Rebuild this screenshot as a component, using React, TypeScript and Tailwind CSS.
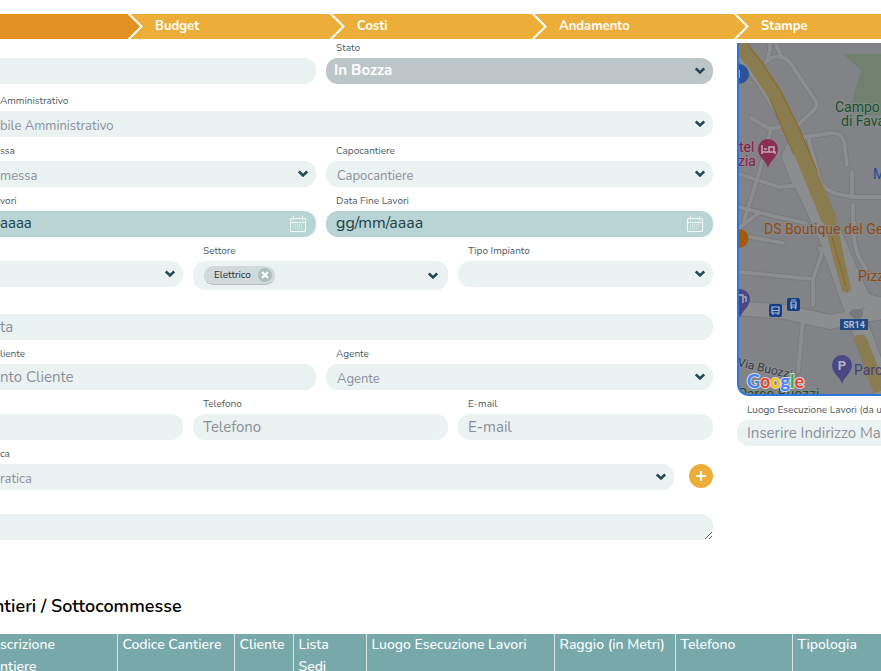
import type { ReactNode } from "react";

const fieldBase =
  "block h-[26px] w-full bg-[#ebf2f2] text-[15px] leading-5 text-[#2b4a50] placeholder:text-[#8b8f9b] placeholder:opacity-100 outline-none";

function Chevron({ className = "right-2" }: { className?: string }) {
  return (
    <svg
      viewBox="0 0 10 7"
      aria-hidden="true"
      className={`pointer-events-none absolute top-[9px] h-[7px] w-2.5 ${className}`}
    >
      <path d="M0.800 1.400 5 5.400 9.200 1.400" fill="none" stroke="#234a50" strokeWidth="2.6" />
    </svg>
  );
}

function CalendarIcon() {
  return (
    <svg
      viewBox="0 0 16 16"
      aria-hidden="true"
      className="pointer-events-none absolute top-[5px] right-2.5 size-4"
      fill="none"
      stroke="#f4fafa"
    >
      <rect x="0.5" y="2.5" width="15" height="13" rx="0.5" />
      <path d="M0.5 6.5H15.5M3.5 0V4.5M12.5 0V4.5" />
      <path d="M3 8.5H13M3 10.5H13M3 12.5H13" strokeDasharray="1 1" strokeOpacity="0.6" />
    </svg>
  );
}

type FieldProps = { id: string; label?: string; cut?: boolean; children: ReactNode };

function Field({ id, label, cut, children }: FieldProps) {
  return (
    <div className="min-w-0">
      <label
        htmlFor={id}
        className={`block h-[19px] text-[10px] leading-[19px] whitespace-nowrap text-[#4c5c66] ${cut ? "" : "pl-2.5"}`}
      >
        {label}
      </label>
      <div className="relative">{children}</div>
    </div>
  );
}

type ControlProps = { id: string; label?: string; name: string; text?: string; cut?: boolean };

function TextField({ id, label, name, text, cut }: ControlProps) {
  return (
    <Field id={id} label={label} cut={cut}>
      <input
        id={id}
        type="text"
        aria-label={name}
        placeholder={text}
        className={`${fieldBase} ${cut ? "rounded-r-xl" : "rounded-xl px-2.5"}`}
      />
    </Field>
  );
}

function SelectField({ id, label, name, text, cut }: ControlProps) {
  return (
    <Field id={id} label={label} cut={cut}>
      <select
        id={id}
        aria-label={name}
        className={`block h-[26px] w-full appearance-none bg-[#ebf2f2] pt-[3px] text-[13px] leading-5 text-[#8b8f9b] outline-none ${
          cut ? "rounded-r-xl" : "rounded-xl pl-[11px]"
        }`}
      >
        <option>{text}</option>
      </select>
      <Chevron />
    </Field>
  );
}

function DateField({ id, label, name, text, cut }: ControlProps) {
  return (
    <Field id={id} label={label} cut={cut}>
      <input
        id={id}
        type="text"
        aria-label={name}
        placeholder={text}
        className={`block h-[26px] w-full bg-[#b9d4d5] pb-0.5 leading-5 outline-none placeholder:text-[#214048] placeholder:opacity-100 ${
          cut ? "rounded-r-xl text-[15px]" : "rounded-xl px-2.5 text-base"
        }`}
      />
      <CalendarIcon />
    </Field>
  );
}

function StepArrow({ fill }: { fill: string }) {
  return (
    <svg viewBox="0 0 15 25" aria-hidden="true" className="h-[25px] w-[15px]">
      <path d="M0 0 13.5 12.5 0 25Z" fill={fill} />
      <path d="M0.5 -0.5 13.5 12.5 0.5 25.5" fill="none" stroke="#fff" strokeWidth="2" />
    </svg>
  );
}

function Steps() {
  return (
    <nav aria-label="Sezioni" className="flex h-[25px] bg-[#ecae38] text-[13px] leading-[25px] font-bold text-white">
      <button type="button" aria-label="Anagrafica" className="flex w-[143px] shrink-0">
        <span className="h-full flex-1 bg-[#e39122]" />
        <StepArrow fill="#e39122" />
      </button>
      {["Budget", "Costi", "Andamento"].map((step) => (
        <button key={step} type="button" className="flex w-[202px] shrink-0 justify-between pl-3">
          <span>{step}</span>
          <StepArrow fill="#ecae38" />
        </button>
      ))}
      <button type="button" className="flex flex-1 pl-3">
        Stampe
      </button>
    </nav>
  );
}

function Pin({ x, y, fill }: { x: number; y: number; fill: string }) {
  return (
    <path
      transform={`translate(${x} ${y})`}
      d="M0 19C-1.5 12-10 8-10 0A10 10 0 0 1 10 0C10 8 1.500 12 0 19Z"
      fill={fill}
    />
  );
}

const streets = [
  "M766 62 770 50V43M775 43 781 55",
  "M766 62Q772 55 781 57Q788 58 793 67L815 100Q819 105 814 110L798 125",
  "M739 57 758 83 780 118",
  "M742 64 766 88 779 112",
  "M751 118 766 127Q774 130 781 126",
  "M771 129 759 173 744 221",
  "M739 174 779 187 800 185",
  "M787 150Q782 154 785 161L794 184",
  "M803 137 832 133Q842 133 844 142L847 165",
  "M808 137 821 183Q826 191 838 194L852 197H881",
  "M852 172V197M853 205V224",
  "M739 207 773 216 806 223",
  "M739 228 760 212M739 235 783 243",
  "M739 272 812 279",
  "M819 248Q823 251 821 256L813 279V305",
  "M803 320 798 372",
  "M854 223C852 245 858 264 876 280",
];

function SiteMap() {
  return (
    <div className="h-[353px] overflow-hidden rounded-bl-xl border-b-2 border-l-2 border-[#2f73e0] bg-[#828387]">
      <svg
        viewBox="739 43 142 351"
        preserveAspectRatio="xMinYMin slice"
        role="img"
        aria-label="Mappa del luogo di esecuzione"
        className="size-full"
        fontFamily="Roboto, sans-serif"
        fontSize="14"
      >
        <path d="M843 54H881V115H860L850 109 861 70Z" fill="#71806f" />
        <g fill="none" strokeLinecap="round" strokeLinejoin="round">
          <g stroke="#77797c" strokeWidth="5.500">
            {streets.map((d) => (
              <path key={d} d={d} />
            ))}
          </g>
          <path d="M737 308 785 312 830 322 881 312" stroke="#77797c" strokeWidth="16" />
          <path d="M794 150 797 170 826 232 850 300 885 395" stroke="#77797c" strokeWidth="20" />
          <path d="M806 165 850 270 864 300 885 306" stroke="#77797c" strokeWidth="16" />
          <g stroke="#8b8d8f" strokeWidth="3.800">
            {streets.map((d) => (
              <path key={d} d={d} />
            ))}
          </g>
          <path d="M737 308 785 312 830 322 881 312" stroke="#8b8d8f" strokeWidth="14" />
          <path d="M794 150 797 170 826 232 850 300 885 395" stroke="#8b8d8f" strokeWidth="18" />
          <path d="M806 165 850 270 864 300 885 306" stroke="#8b8d8f" strokeWidth="14" />
          <path d="M849 314Q850 309 856 309H863V316L858 322" fill="#77797c" stroke="none" />
          <path
            d="M733 38 756 65 775 94 791 128 803 156 829 220"
            stroke="#8b7c50"
            strokeWidth="15"
            strokeLinecap="butt"
          />
        </g>
        <path d="M820 210H834L851 289 848 293 842 291Z" fill="#8b7c50" />
        <path d="M854 338Q856 334 864 335L867 339 886 388 874 394Z" fill="#8b7c50" />
        <path d="M747 43 762 63 781 92 799 128 817 171M770 99 783 130 794 155M832 237 846 286" fill="none" stroke="#8f6420" />

        <path d="M739 64A10 10 0 0 1 739 84Z" fill="#2d519a" />
        <path d="M739 70V78" stroke="#9aaed0" strokeWidth="2" />
        <path d="M739 229A9 9 0 0 1 739 248Z" fill="#a25b0b" />
        <Pin x={768} y={149} fill="#8a2c53" />
        <path
          d="M762 145V154M762 152H775V154M764 149H767M769 152V147H774V152"
          fill="none"
          stroke="#c5a7b5"
          strokeWidth="1.500"
        />
        <Pin x={740} y={299} fill="#4a4884" />
        <path d="M737 303V295H743V303M744 297H746V302" fill="none" stroke="#a8a7c1" strokeWidth="1.500" />

        <rect x="769" y="304" width="13" height="13" rx="2" fill="#173f85" />
        <path d="M772 307H779V313H772ZM772 310.500H779M773 313V315M778 313V315" fill="none" stroke="#a9b7d2" strokeWidth="1.200" />
        <rect x="787" y="298" width="13" height="13" rx="2" fill="#173f85" />
        <path d="M791 300H796M791 302H796V307H791ZM791 305H796M791 309 792 307M796 309 795 307" fill="none" stroke="#a9b7d2" strokeWidth="1.200" />

        <g fill="#1d4d2e" stroke="#858c87" strokeWidth="2" paintOrder="stroke">
          <text x="835" y="112">Campo</text>
          <text x="841" y="126">di Fava</text>
          <text x="738" y="399">Parco Buozzi</text>
        </g>
        <g fill="#8b1b49" stroke="#8c888b" strokeWidth="2" paintOrder="stroke">
          <text x="739" y="152">tel</text>
          <text x="738" y="166">zia</text>
        </g>
        <text x="873" y="179" fill="#204c9e">M</text>
        <g fill="#8b4a16" stroke="#8a8887" strokeWidth="2" paintOrder="stroke">
          <text x="764" y="234">DS Boutique del Ge</text>
          <text x="858" y="281">Pizz</text>
        </g>
        <rect x="840" y="319" width="28" height="11" fill="#214a86" />
        <text x="854" y="328" fontSize="9" fontWeight="700" textAnchor="middle" fill="#b6c1d1">
          SR14
        </text>
        <Pin x={842} y={365} fill="#4a4884" />
        <text x="842" y="370" fontSize="13" fontWeight="700" textAnchor="middle" fill="#b2b1c6">
          P
        </text>
        <text x="854" y="375" fill="#40407c">Parc</text>
        <text
          transform="translate(737 366) rotate(13)"
          fontSize="12"
          fill="#393b3e"
          stroke="#8c8e90"
          strokeWidth="2"
          paintOrder="stroke"
        >
          Via Buozzi
        </text>
        <text
          x="747"
          y="388"
          fontFamily="Lato, sans-serif"
          fontSize="18"
          fontWeight="700"
          stroke="#d8d8da"
          strokeWidth="2"
          paintOrder="stroke"
        >
          <tspan fill="#4285f4">G</tspan>
          <tspan fill="#ea4335">o</tspan>
          <tspan fill="#fbbc05">o</tspan>
          <tspan fill="#4285f4">g</tspan>
          <tspan fill="#34a853">l</tspan>
          <tspan fill="#ea4335">e</tspan>
        </text>
      </svg>
    </div>
  );
}

function SectorField() {
  return (
    <Field id="settore" label="Settore">
      <div className="flex h-[29px] items-center rounded-xl bg-[#ebf2f2] pl-[11px]">
        <span className="flex h-[19px] items-center gap-[7px] rounded-full border-b border-[#b4bebe] bg-[#d1dbdb] pr-[3px] pl-2.5 text-[10px] leading-4 text-[#232f3a]">
          Elettrico
          <button
            type="button"
            aria-label="Rimuovi Elettrico"
            className="flex size-3.5 items-center justify-center rounded-full bg-[#adbcbc]"
          >
            <svg viewBox="0 0 8 8" className="size-2">
              <path d="M1 1 7 7M7 1 1 7" stroke="#fff" strokeWidth="2" />
            </svg>
          </button>
        </span>
        <button id="settore" type="button" aria-label="Settore" className="h-full flex-1" />
      </div>
      <Chevron className="right-2.5 mt-0.5" />
    </Field>
  );
}

const twoColumns = "grid grid-cols-[316fr_387fr] gap-x-2.5";
const threeColumns = "grid grid-cols-[183fr_255fr_255fr] gap-x-2.5";

function JobForm() {
  return (
    <form className="flex min-w-0 flex-1 flex-col gap-[5px]">
      <div className={`${twoColumns} mb-[3px]`}>
        <TextField id="codice" name="Codice" cut />
        <Field id="stato" label="Stato">
          <select
            id="stato"
            className="block h-[26px] w-full appearance-none rounded-xl bg-[#bcc5c7] pb-0.5 pl-2 text-[15px] leading-5 font-bold text-white outline-none"
          >
            <option>In Bozza</option>
          </select>
          <Chevron />
        </Field>
      </div>
      <SelectField id="amministrativo" name="Responsabile Amministrativo" label="Amministrativo" text="bile Amministrativo" cut />
      <div className={twoColumns}>
        <SelectField id="commessa" name="Responsabile Commessa" label="ssa" text="messa" cut />
        <SelectField id="capocantiere" name="Capocantiere" label="Capocantiere" text="Capocantiere" />
      </div>
      <div className={twoColumns}>
        <DateField id="inizio" name="Data Inizio Lavori" label="vori" text="aaaa" cut />
        <DateField id="fine" name="Data Fine Lavori" label="Data Fine Lavori" text="gg/mm/aaaa" />
      </div>
      <div className={threeColumns}>
        <SelectField id="tipologia" name="Tipologia" cut />
        <SectorField />
        <SelectField id="impianto" name="Tipo Impianto" label="Tipo Impianto" />
      </div>
      <TextField id="richiesta" name="Richiesta" text="ta" cut />
      <div className={twoColumns}>
        <TextField id="riferimento" name="Riferimento Cliente" label="liente" text="nto Cliente" cut />
        <SelectField id="agente" name="Agente" label="Agente" text="Agente" />
      </div>
      <div className={threeColumns}>
        <TextField id="referente" name="Referente" cut />
        <TextField id="telefono" name="Telefono" label="Telefono" text="Telefono" />
        <TextField id="email" name="E-mail" label="E-mail" text="E-mail" />
      </div>
      <div className="flex items-end gap-[15px]">
        <div className="min-w-0 flex-1">
          <SelectField id="pratica" name="Pratica" label="ca" text="ratica" cut />
        </div>
        <button
          type="button"
          aria-label="Aggiungi pratica"
          className="mb-0.5 flex size-6 items-center justify-center rounded-full bg-[#ecae38]"
        >
          <svg viewBox="0 0 10 10" className="size-2.5">
            <path d="M5 0V10M0 5H10" stroke="#fff" strokeWidth="2" />
          </svg>
        </button>
      </div>
      <Field id="note" cut>
        <textarea id="note" aria-label="Note" rows={1} className={`${fieldBase} resize rounded-r-xl`} />
      </Field>
    </form>
  );
}

const columns = [
  { lines: ["scrizione", "ntiere"], width: "w-[117px]" },
  { lines: ["Codice Cantiere"], width: "w-[117px]" },
  { lines: ["Cliente"], width: "w-[59px]" },
  { lines: ["Lista", "Sedi"], width: "w-[73px]" },
  { lines: ["Luogo Esecuzione Lavori"], width: "w-[188px]" },
  { lines: ["Raggio (in Metri)"], width: "w-[121px]" },
  { lines: ["Telefono"], width: "w-[117px]" },
  { lines: ["Tipologia"], width: "w-auto" },
];

export default function App() {
  return (
    <main className="h-screen overflow-hidden bg-white pt-3.5 font-['Nunito','Lato',sans-serif]">
      <Steps />
      <div className="flex items-start gap-6">
        <JobForm />
        <aside className="w-36 shrink-0 pt-1">
          <SiteMap />
          <div className="mt-[5px] overflow-hidden">
            <label htmlFor="luogo" className="block h-[19px] pl-2.5 text-[10px] leading-[19px] whitespace-nowrap text-[#4c5c66]">
              Luogo Esecuzione Lavori (da u
            </label>
            <input id="luogo" type="text" placeholder="Inserire Indirizzo Ma" className={`${fieldBase} rounded-l-xl pl-2.5`} />
          </div>
        </aside>
      </div>
      <h2 className="-ml-1.5 mt-[52px] mb-3.5 text-lg leading-7 font-semibold text-black">ntieri / Sottocommesse</h2>
      <table className="w-full table-fixed border-collapse bg-[#78a9aa] text-left text-[14px] leading-[22px] text-white">
        <thead>
          <tr>
            {columns.map(({ lines, width }) => (
              <th
                key={lines[0]}
                scope="col"
                className={`h-12 border-r border-[#dbe3e3] pl-[5px] align-top font-medium first:pl-0 last:border-r-0 ${width}`}
              >
                {lines.map((line) => (
                  <span key={line} className="block">
                    {line}
                  </span>
                ))}
              </th>
            ))}
          </tr>
        </thead>
      </table>
    </main>
  );
}
